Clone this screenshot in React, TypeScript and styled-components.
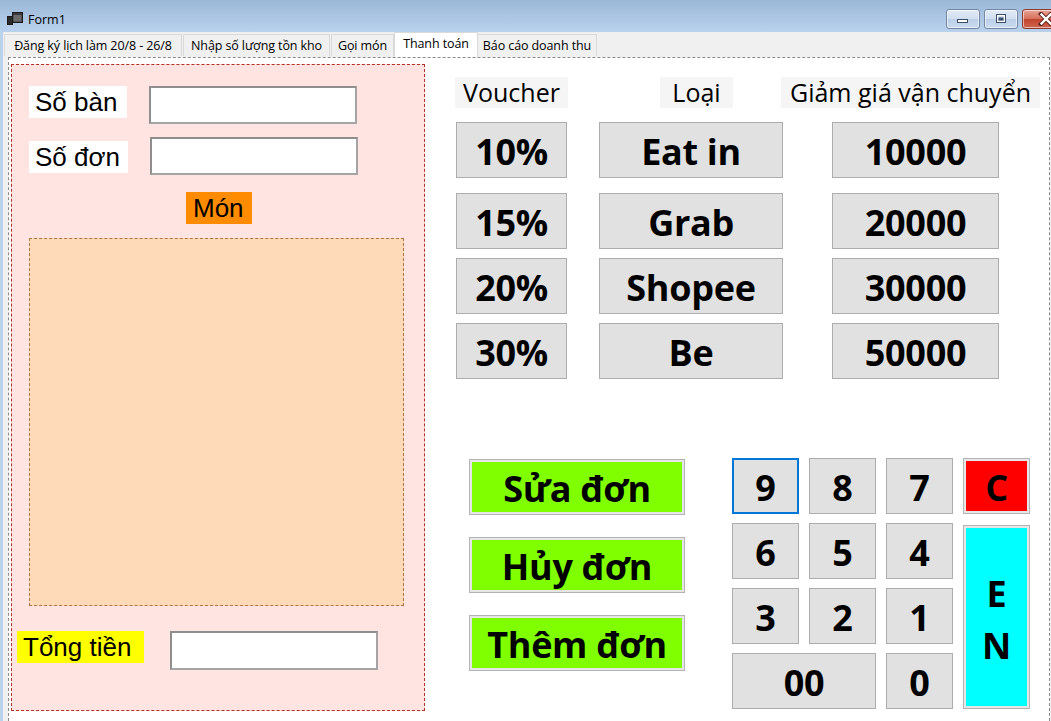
import React from "react";
import styled, { createGlobalStyle } from "styled-components";

const GlobalStyle = createGlobalStyle`
  html, body { margin: 0; padding: 0; background: #ffffff; }
  body { font-family: "Open Sans", "Noto Sans", sans-serif; }
  #root { width: 1051px; height: 721px; overflow: hidden; }
  * { box-sizing: border-box; }
`;

const Window = styled.div`
  width: 1051px;
  height: 721px;
  display: flex;
  flex-direction: column;
  overflow: hidden;
  background: #f0f0f0;
`;

const TitleBar = styled.div`
  height: 32px;
  flex: none;
  display: flex;
  align-items: center;
  padding: 6px 0 0 7px;
  background: linear-gradient(#9cb8d8, #b9d1ec);
  overflow: hidden;
`;

const TitleText = styled.span`
  font-family: "Open Sans", sans-serif;
  font-size: 12.5px;
  color: #000;
  margin-left: 5px;
`;

const Caption = styled.div`
  display: flex;
  gap: 4px;
  margin-left: auto;
  margin-right: -18px;
  align-self: flex-start;
  margin-top: 3px;
  flex: none;
`;

const CaptionBtn = styled.div<{ $close?: boolean }>`
  width: ${(p) => (p.$close ? 47 : 34)}px;
  height: 20px;
  flex: none;
  border: 1px solid ${(p) => (p.$close ? "#8c3b2f" : "#7488a4")};
  border-radius: 3px;
  background: ${(p) =>
    p.$close
      ? "linear-gradient(#e8a597, #d7705d 48%, #c2442e 52%, #cf6650)"
      : "linear-gradient(#e3ecf7, #d0deef 48%, #bccfe7 52%, #c9dbf1)"};
  box-shadow: inset 0 0 0 1px rgba(255, 255, 255, 0.55);
  display: flex;
  align-items: center;
  justify-content: center;
`;

const Body = styled.div`
  flex: 1;
  display: flex;
  min-height: 0;
`;

const FrameEdge = styled.div`
  width: 3px;
  flex: none;
  background: #bad2eb;
`;

const Client = styled.div`
  flex: 1;
  display: flex;
  flex-direction: column;
  min-width: 0;
  background: #f0f0f0;
`;

const TabStrip = styled.div`
  height: 25px;
  flex: none;
  display: flex;
  align-items: flex-end;
  padding-left: 1px;
`;

const Tab = styled.div<{ $w: number; $active?: boolean }>`
  width: ${(p) => p.$w}px;
  height: ${(p) => (p.$active ? 25 : 22)}px;
  margin: ${(p) => (p.$active ? "0 -1px 0 -1px" : "0 1px 1px 0")};
  flex: none;
  display: flex;
  align-items: center;
  justify-content: center;
  padding-bottom: ${(p) => (p.$active ? 4 : 1)}px;
  font-family: "Open Sans", sans-serif;
  font-size: 12.5px;
  letter-spacing: -0.1px;
  color: #000;
  white-space: nowrap;
  background: ${(p) => (p.$active ? "#ffffff" : "#f0f0f0")};
  border: 1px solid #dadada;
  border-bottom: none;
  position: relative;
  z-index: ${(p) => (p.$active ? 1 : 0)};
`;

const TabPage = styled.div`
  flex: 1;
  margin: 0 1px 0 5px;
  border: 1px dashed #8a8a8a;
  border-bottom: none;
  background: #ffffff;
  display: flex;
  align-items: flex-start;
  min-height: 0;
`;

const LeftPanel = styled.div`
  width: 414px;
  height: 647px;
  flex: none;
  margin: 6px 0 0 2px;
  border: 1px dashed #b0302a;
  background: #ffe4e1;
  display: flex;
  flex-direction: column;
`;

const FieldRow = styled.div<{ $mt: number; $pl: number; $gap: number }>`
  display: flex;
  align-items: flex-start;
  margin-top: ${(p) => p.$mt}px;
  padding-left: ${(p) => p.$pl}px;
  gap: ${(p) => p.$gap}px;
`;

const Caption26 = styled.div<{ $w: number; $bg: string; $mt?: number }>`
  width: ${(p) => p.$w}px;
  height: 32px;
  flex: none;
  margin-top: ${(p) => p.$mt ?? 0}px;
  background: ${(p) => p.$bg};
  font-family: "Liberation Sans", Arial, sans-serif;
  font-size: 26px;
  line-height: 32px;
  color: #000;
  padding-left: 6px;
  white-space: nowrap;
`;

const TextBox = styled.div<{ $h: number }>`
  width: 208px;
  height: ${(p) => p.$h}px;
  flex: none;
  background: #ffffff;
  border: 2px solid #a4a4a4;
  border-top-color: #8e8e8e;
  border-left-color: #8e8e8e;
`;

const MonLabel = styled.div`
  align-self: center;
  margin: 17px 0 0 2px;
  width: 66px;
  height: 32px;
  background: #ff8c00;
  font-family: "Liberation Sans", Arial, sans-serif;
  font-size: 26px;
  line-height: 32px;
  padding-left: 7px;
  color: #000;
`;

const DishBox = styled.div`
  margin: 14px 0 0 17px;
  width: 375px;
  height: 368px;
  background: #ffdab9;
  border: 1px dashed #b0743c;
`;

const RightArea = styled.div`
  flex: 1;
  display: flex;
  flex-direction: column;
  min-width: 0;
`;

const HeaderRow = styled.div`
  display: flex;
  margin-top: 19px;
`;

const HeaderLabel = styled.div<{ $w: number; $ml: number }>`
  width: ${(p) => p.$w}px;
  margin-left: ${(p) => p.$ml}px;
  height: 31px;
  flex: none;
  background: #f5f5f5;
  font-family: "Open Sans", "Noto Sans", sans-serif;
  font-size: 25px;
  line-height: 31px;
  text-align: center;
  color: #000;
  white-space: nowrap;
`;

const OptionGrid = styled.div`
  display: flex;
  margin: 14px 0 0 31px;
`;

const OptionColumn = styled.div<{ $w: number; $ml?: number }>`
  width: ${(p) => p.$w}px;
  margin-left: ${(p) => p.$ml ?? 0}px;
  flex: none;
  display: flex;
  flex-direction: column;
  gap: 9px;
  & > :first-child {
    margin-bottom: 6px;
  }
`;

const KeyButton = styled.div<{ $focus?: boolean }>`
  height: 56px;
  display: flex;
  align-items: center;
  justify-content: center;
  padding-top: 3px;
  background: #e1e1e1;
  border: ${(p) => (p.$focus ? "2px solid #0078d7" : "1px solid #adadad")};
  font-family: "Open Sans", "Noto Sans", sans-serif;
  font-weight: 700;
  font-size: 36px;
  color: #000;
  white-space: nowrap;
  letter-spacing: -0.3px;
`;

const ColorButton = styled(KeyButton)<{ $bg: string }>`
  background: ${(p) => p.$bg};
  border: 1px solid #b4b4b4;
  box-shadow: inset 0 0 0 2px #e6e6e6;
`;

const BottomSection = styled.div`
  display: flex;
  align-items: flex-start;
  margin-top: 79px;
`;

const ActionColumn = styled.div`
  width: 216px;
  flex: none;
  margin: 1px 0 0 44px;
  display: flex;
  flex-direction: column;
  gap: 22px;
`;

const Numpad = styled.div`
  margin-left: 47px;
  display: grid;
  grid-template-columns: repeat(4, 67px);
  grid-auto-rows: 56px;
  column-gap: 10px;
  row-gap: 9px;
`;

const WideKey = styled(KeyButton)`
  grid-column: span 2;
`;

const EnterKey = styled(ColorButton)`
  grid-row: span 3;
  height: auto;
  margin-top: 2px;
  flex-direction: column;
  line-height: 52px;
  padding-top: 6px;
`;

const WindowIcon = () => (
  <svg width="16" height="14" viewBox="0 0 16 14">
    <rect x="0.5" y="4.5" width="5" height="8" fill="#2b2b2b" stroke="#1a1a1a" />
    <rect x="5.5" y="0.5" width="10" height="10" fill="#3a3a3a" stroke="#1a1a1a" />
    <rect x="6.5" y="3" width="8" height="6.5" fill="#6b6b6b" />
  </svg>
);

const MinGlyph = () => (
  <svg width="16" height="10" viewBox="0 0 16 10">
    <rect x="2.5" y="5.5" width="10" height="3" fill="#ffffff" stroke="#3d4f68" />
  </svg>
);

const MaxGlyph = () => (
  <svg width="14" height="12" viewBox="0 0 14 12">
    <rect x="2.5" y="1.5" width="9" height="8" fill="none" stroke="#3d4f68" />
    <rect x="3.5" y="2.5" width="7" height="6" fill="none" stroke="#ffffff" />
    <rect x="4.5" y="4.5" width="5" height="3" fill="#3d4f68" />
  </svg>
);

const CloseGlyph = () => (
  <svg width="16" height="14" viewBox="0 0 16 14">
    <path d="M3 2 L13 12 M13 2 L3 12" stroke="#5a1f16" strokeWidth="4.2" strokeLinecap="square" />
    <path d="M3.5 2.5 L12.5 11.5 M12.5 2.5 L3.5 11.5" stroke="#ffffff" strokeWidth="2.4" strokeLinecap="square" />
  </svg>
);

const tabs = [
  { label: "Đăng ký lịch làm 20/8 - 26/8", w: 178 },
  { label: "Nhập số lượng tồn kho", w: 147 },
  { label: "Gọi món", w: 63 },
  { label: "Thanh toán", w: 84, active: true },
  { label: "Báo cáo doanh thu", w: 120 },
];

export default function App() {
  return (
    <>
      <GlobalStyle />
      <Window>
        <TitleBar>
          <WindowIcon />
          <TitleText>Form1</TitleText>
          <Caption>
            <CaptionBtn>
              <MinGlyph />
            </CaptionBtn>
            <CaptionBtn>
              <MaxGlyph />
            </CaptionBtn>
            <CaptionBtn $close>
              <CloseGlyph />
            </CaptionBtn>
          </Caption>
        </TitleBar>
        <Body>
          <FrameEdge />
          <Client>
            <TabStrip>
              {tabs.map((t) => (
                <Tab key={t.label} $w={t.w} $active={t.active}>
                  {t.label}
                </Tab>
              ))}
            </TabStrip>
            <TabPage>
              <LeftPanel>
                <FieldRow $mt={21} $pl={17} $gap={22}>
                  <Caption26 $w={98} $bg="#ffffff">Số bàn</Caption26>
                  <TextBox $h={38} />
                </FieldRow>
                <FieldRow $mt={13} $pl={17} $gap={22}>
                  <Caption26 $w={99} $bg="#ffffff" $mt={4}>Số đơn</Caption26>
                  <TextBox $h={38} />
                </FieldRow>
                <MonLabel>Món</MonLabel>
                <DishBox />
                <FieldRow $mt={25} $pl={5} $gap={26}>
                  <Caption26 $w={127} $bg="#ffff00">Tổng tiền</Caption26>
                  <TextBox $h={39} />
                </FieldRow>
              </LeftPanel>
              <RightArea>
                <HeaderRow>
                  <HeaderLabel $w={113} $ml={30}>Voucher</HeaderLabel>
                  <HeaderLabel $w={73} $ml={92}>Loại</HeaderLabel>
                  <HeaderLabel $w={259} $ml={48}>Giảm giá vận chuyển</HeaderLabel>
                </HeaderRow>
                <OptionGrid>
                  <OptionColumn $w={111}>
                    {["10%", "15%", "20%", "30%"].map((v) => (
                      <KeyButton key={v}>{v}</KeyButton>
                    ))}
                  </OptionColumn>
                  <OptionColumn $w={184} $ml={32}>
                    {["Eat in", "Grab", "Shopee", "Be"].map((v) => (
                      <KeyButton key={v}>{v}</KeyButton>
                    ))}
                  </OptionColumn>
                  <OptionColumn $w={167} $ml={49}>
                    {["10000", "20000", "30000", "50000"].map((v) => (
                      <KeyButton key={v}>{v}</KeyButton>
                    ))}
                  </OptionColumn>
                </OptionGrid>
                <BottomSection>
                  <ActionColumn>
                    {["Sửa đơn", "Hủy đơn", "Thêm đơn"].map((v) => (
                      <ColorButton key={v} $bg="#7fff00">
                        {v}
                      </ColorButton>
                    ))}
                  </ActionColumn>
                  <Numpad>
                    <KeyButton $focus>9</KeyButton>
                    <KeyButton>8</KeyButton>
                    <KeyButton>7</KeyButton>
                    <ColorButton $bg="#ff0000">C</ColorButton>
                    <KeyButton>6</KeyButton>
                    <KeyButton>5</KeyButton>
                    <KeyButton>4</KeyButton>
                    <EnterKey $bg="#00ffff">
                      <span>E</span>
                      <span>N</span>
                    </EnterKey>
                    <KeyButton>3</KeyButton>
                    <KeyButton>2</KeyButton>
                    <KeyButton>1</KeyButton>
                    <WideKey>00</WideKey>
                    <KeyButton>0</KeyButton>
                  </Numpad>
                </BottomSection>
              </RightArea>
            </TabPage>
          </Client>
        </Body>
      </Window>
    </>
  );
}
